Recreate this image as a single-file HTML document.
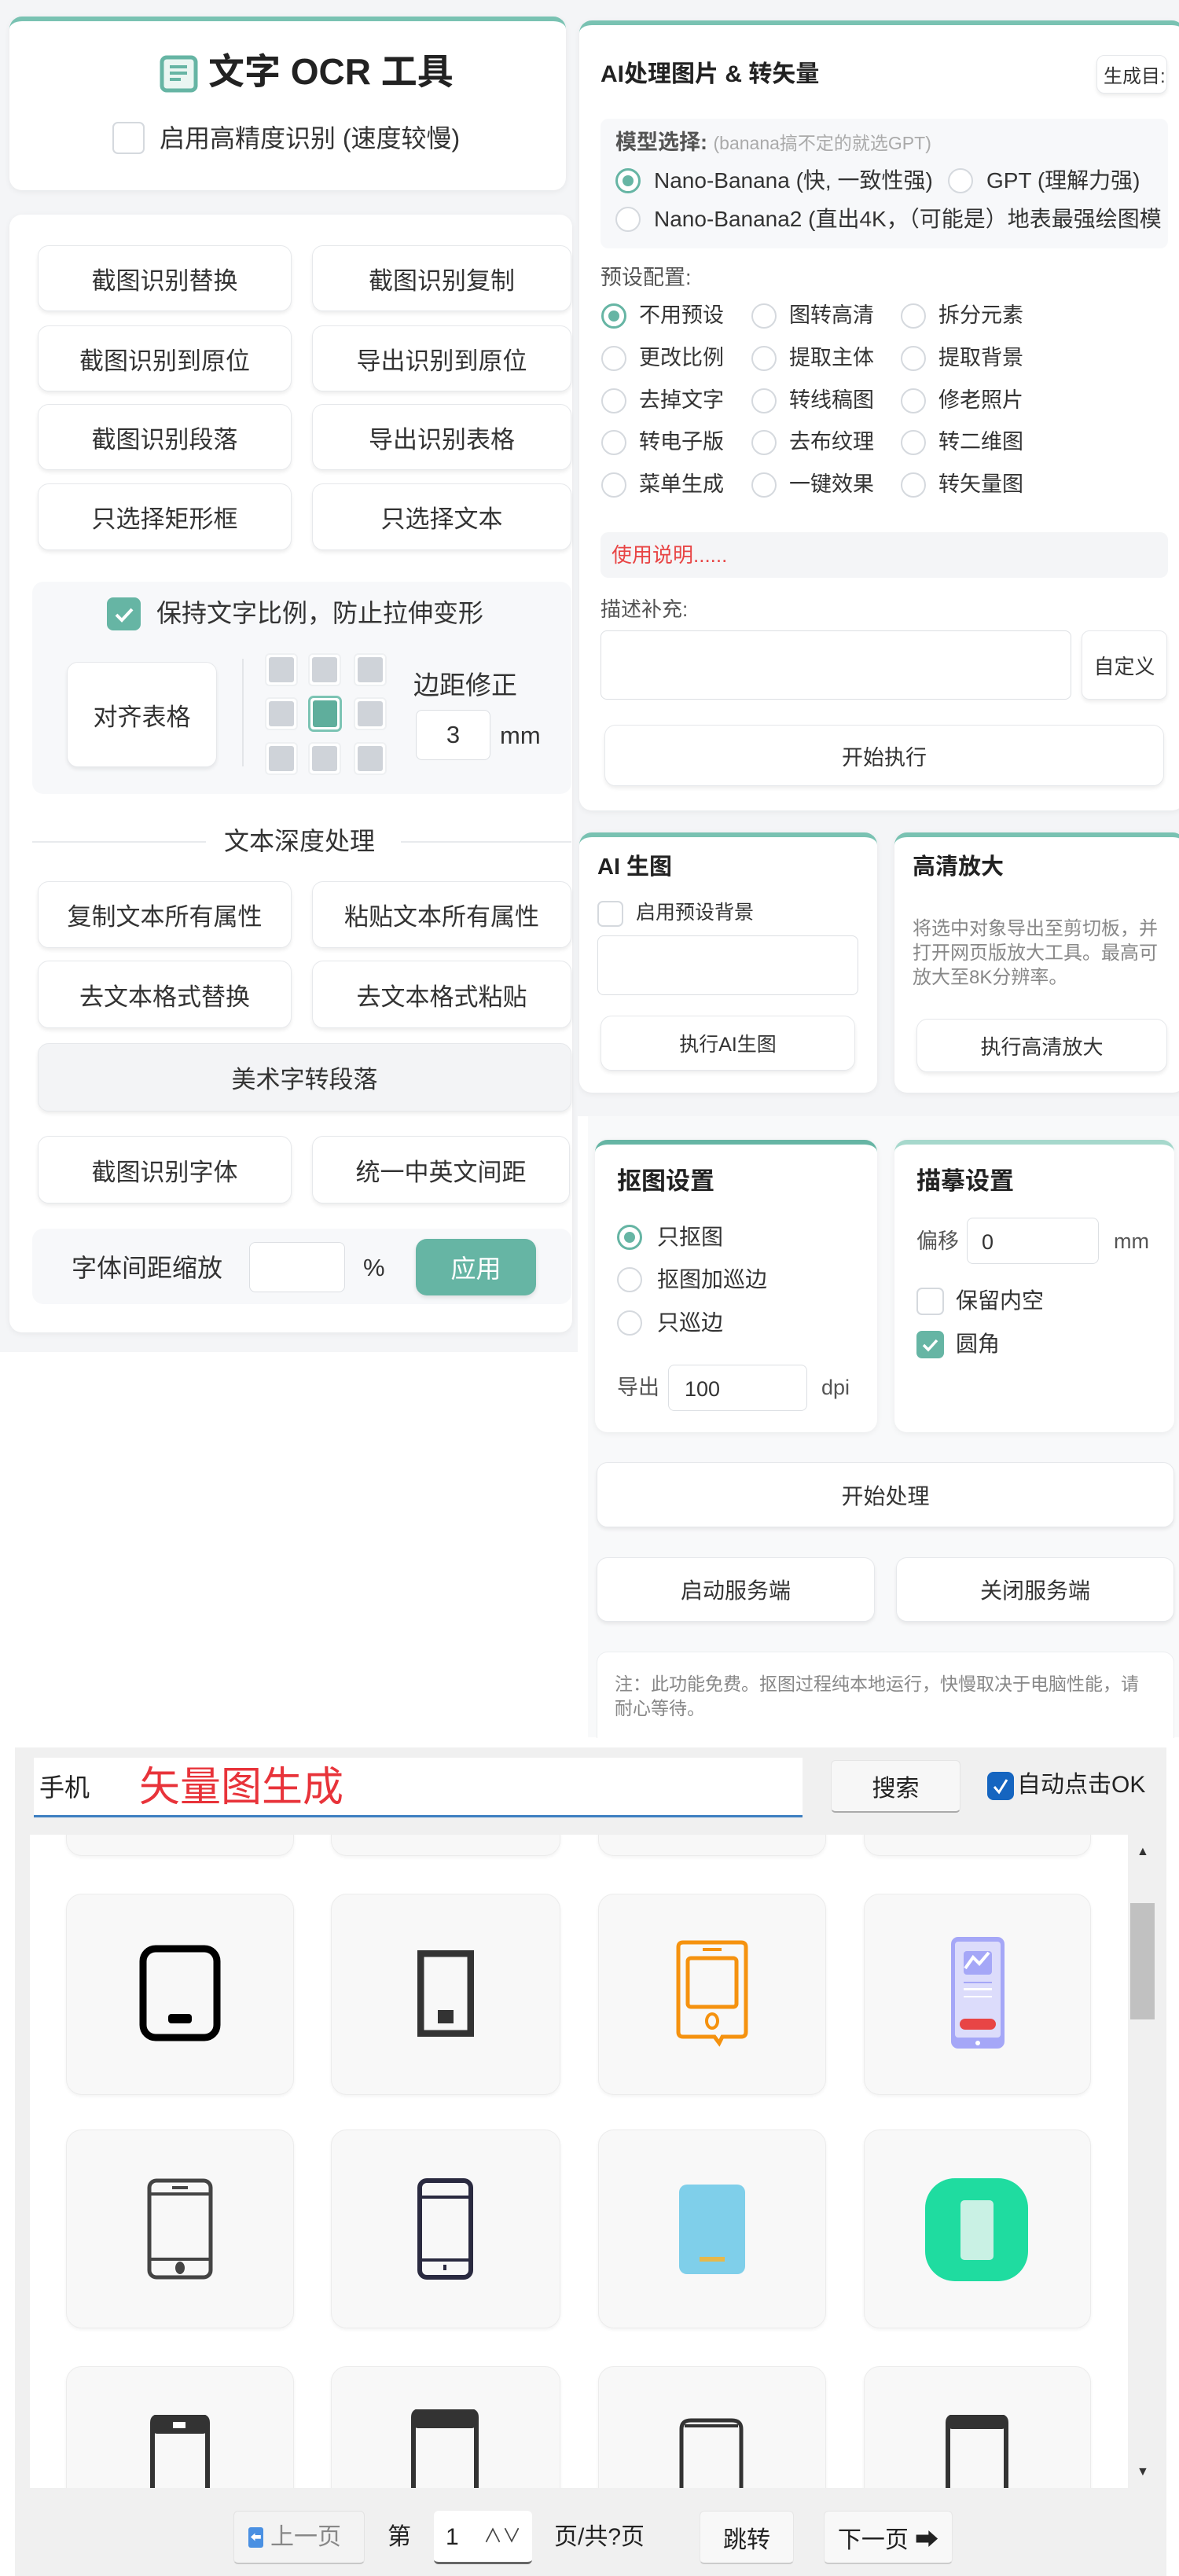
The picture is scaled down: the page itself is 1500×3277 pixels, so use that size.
<!DOCTYPE html>
<html><head><meta charset="utf-8">
<style>
*{box-sizing:border-box;margin:0;padding:0}
body{width:1500px;height:3277px;position:relative;background:#fff;font-family:"Liberation Sans","Noto Sans CJK SC",sans-serif;color:#333;overflow:hidden}
.a{position:absolute}
.card{position:absolute;background:#fff;border-radius:16px;box-shadow:0 2px 8px rgba(0,0,0,.06)}
.top{border-top:6px solid #79c2b2}
.btn{position:absolute;background:#fff;border:1px solid #e6e8eb;border-radius:14px;box-shadow:0 3px 5px rgba(0,0,0,.07);display:flex;align-items:center;justify-content:center;font-size:31px;color:#333}
.rb{position:absolute;width:32px;height:32px;border-radius:50%;border:2px solid #d5d9de;background:#fff}
.rb.on{border:3px solid #66b5a4}
.rb.on::after{content:"";position:absolute;left:6px;top:6px;width:14px;height:14px;border-radius:50%;background:#66b5a4}
.t{position:absolute;white-space:nowrap;line-height:1}
.cb{position:absolute;border:2px solid #d5d9de;border-radius:7px;background:#fff}
.cb.on{background:#66b5a4;border-color:#66b5a4}
.inp{position:absolute;background:#fff;border:1.5px solid #dcdfe3;border-radius:8px}
.ic{position:absolute;background:#f8f8f8;border:1px solid #ececec;border-radius:20px;box-shadow:0 2px 4px rgba(0,0,0,.05)}
.cell{position:absolute;width:42px;height:42px;border:2px solid #eef0f2;border-radius:6px;background:#fff}
.cell::after{content:"";position:absolute;left:3px;top:3px;width:32px;height:32px;background:#cfd3d9;border-radius:3px}
</style></head><body>

<div class="a" style="left:0;top:0;width:735px;height:1720px;background:#f4f5f7"></div>
<div class="a" style="left:735px;top:0;width:765px;height:1420px;background:#f4f5f7"></div>
<div class="a" style="left:748px;top:1420px;width:752px;height:790px;background:#f8f9fa"></div>

<div class="card top" style="left:12px;top:21px;width:708px;height:221px"></div>
<svg class="a" style="left:203px;top:70px" width="49" height="48" viewBox="0 0 49 48"><rect x="3" y="3" width="43" height="42" rx="6" fill="#eaf6f2" stroke="#66b5a4" stroke-width="5"/><rect x="13" y="13" width="22" height="4" fill="#66b5a4"/><rect x="13" y="21" width="22" height="4" fill="#66b5a4"/><rect x="13" y="29" width="14" height="4" fill="#66b5a4"/></svg>
<div class="t" style="left:265px;top:68px;font-size:46px;font-weight:bold;color:#222">文字 OCR 工具</div>
<div class="cb" style="left:143px;top:155px;width:41px;height:41px"></div>
<div class="t" style="left:203px;top:160px;font-size:32px;color:#333">启用高精度识别 (速度较慢)</div>

<div class="card" style="left:12px;top:273px;width:716px;height:1422px"></div>
<div class="btn" style="left:48px;top:312px;width:323px;height:84px">截图识别替换</div>
<div class="btn" style="left:397px;top:312px;width:330px;height:84px">截图识别复制</div>
<div class="btn" style="left:48px;top:414px;width:323px;height:84px">截图识别到原位</div>
<div class="btn" style="left:397px;top:414px;width:330px;height:84px">导出识别到原位</div>
<div class="btn" style="left:48px;top:514px;width:323px;height:84px">截图识别段落</div>
<div class="btn" style="left:397px;top:514px;width:330px;height:84px">导出识别表格</div>
<div class="btn" style="left:48px;top:615px;width:323px;height:85px">只选择矩形框</div>
<div class="btn" style="left:397px;top:615px;width:330px;height:85px">只选择文本</div>

<div class="a" style="left:41px;top:740px;width:686px;height:270px;background:#f7f8fa;border-radius:14px"></div>
<div class="cb on" style="left:136px;top:760px;width:43px;height:42px;border-radius:8px"></div>
<svg class="a" style="left:136px;top:760px" width="43" height="42"><path d="M12 22 L19 29 L32 15" fill="none" stroke="#fff" stroke-width="4"/></svg>
<div class="t" style="left:199px;top:764px;font-size:32px;color:#333">保持文字比例，防止拉伸变形</div>
<div class="btn" style="left:85px;top:842px;width:191px;height:134px;font-size:31px">对齐表格</div>
<div class="a" style="left:308px;top:838px;width:2px;height:137px;background:#e3e5e8"></div>
<div class="cell" style="left:337px;top:831px"></div><div class="cell" style="left:392px;top:831px"></div><div class="cell" style="left:450px;top:831px"></div>
<div class="cell" style="left:337px;top:887px"></div>
<div class="a" style="left:392px;top:885px;width:43px;height:46px;border:3px solid #7cc4b4;border-radius:7px;background:#fff"><div style="margin:3px;width:31px;height:34px;background:#5fae9c;border-radius:3px"></div></div>
<div class="cell" style="left:450px;top:887px"></div>
<div class="cell" style="left:337px;top:944px"></div><div class="cell" style="left:392px;top:944px"></div><div class="cell" style="left:450px;top:944px"></div>
<div class="t" style="left:526px;top:855px;font-size:33px;color:#333">边距修正</div>
<div class="inp" style="left:529px;top:903px;width:95px;height:64px;font-size:31px;display:flex;align-items:center;justify-content:center">3</div>
<div class="t" style="left:636px;top:920px;font-size:31px">mm</div>

<div class="a" style="left:41px;top:1070px;width:221px;height:2px;background:#e8eaed"></div>
<div class="a" style="left:510px;top:1070px;width:217px;height:2px;background:#e8eaed"></div>
<div class="t" style="left:285px;top:1054px;font-size:32px;color:#333">文本深度处理</div>

<div class="btn" style="left:48px;top:1121px;width:323px;height:85px">复制文本所有属性</div>
<div class="btn" style="left:397px;top:1121px;width:330px;height:85px">粘贴文本所有属性</div>
<div class="btn" style="left:48px;top:1222px;width:323px;height:86px">去文本格式替换</div>
<div class="btn" style="left:397px;top:1222px;width:330px;height:86px">去文本格式粘贴</div>
<div class="btn" style="left:48px;top:1327px;width:679px;height:87px;background:#f3f4f6">美术字转段落</div>
<div class="btn" style="left:48px;top:1445px;width:323px;height:86px">截图识别字体</div>
<div class="btn" style="left:397px;top:1445px;width:328px;height:86px">统一中英文间距</div>
<div class="a" style="left:41px;top:1563px;width:686px;height:96px;background:#f7f8fa;border-radius:14px"></div>
<div class="t" style="left:91px;top:1597px;font-size:32px">字体间距缩放</div>
<div class="inp" style="left:317px;top:1580px;width:122px;height:64px"></div>
<div class="t" style="left:462px;top:1597px;font-size:31px">%</div>
<div class="a" style="left:529px;top:1576px;width:153px;height:72px;background:#66b5a4;border-radius:14px;color:#fff;font-size:32px;display:flex;align-items:center;justify-content:center;box-shadow:0 3px 6px rgba(0,0,0,.1)">应用</div>

<div class="card top" style="left:737px;top:26px;width:770px;height:1005px"></div>
<div class="t" style="left:764px;top:80px;font-size:30px;font-weight:bold;color:#222">AI处理图片 &amp; 转矢量</div>
<div class="btn" style="left:1395px;top:70px;width:90px;height:49px;font-size:24px;border-radius:10px;justify-content:flex-start;padding-left:8px;overflow:hidden">生成目:</div>
<div class="a" style="left:764px;top:151px;width:722px;height:165px;background:#f7f8fa;border-radius:10px"></div>
<div class="t" style="left:783px;top:168px;font-size:27px;font-weight:bold;color:#555">模型选择: <span style="font-weight:normal;font-size:23px;color:#aaa">(banana搞不定的就选GPT)</span></div>
<div class="rb on" style="left:783px;top:214px"></div>
<div class="t" style="left:832px;top:216px;font-size:28px">Nano-Banana (快, 一致性强)</div>
<div class="rb" style="left:1206px;top:214px"></div>
<div class="t" style="left:1255px;top:216px;font-size:28px">GPT (理解力强)</div>
<div class="rb" style="left:783px;top:263px"></div>
<div class="t" style="left:832px;top:265px;font-size:28px">Nano-Banana2 (直出4K，（可能是）地表最强绘图模</div>
<div class="t" style="left:764px;top:340px;font-size:27px;color:#555">预设配置:</div>

<div class="rb on" style="left:765px;top:386px"></div><div class="t" style="left:813px;top:388px;font-size:27px">不用预设</div>
<div class="rb" style="left:956px;top:386px"></div><div class="t" style="left:1004px;top:388px;font-size:27px">图转高清</div>
<div class="rb" style="left:1146px;top:386px"></div><div class="t" style="left:1194px;top:388px;font-size:27px">拆分元素</div>
<div class="rb" style="left:765px;top:440px"></div><div class="t" style="left:813px;top:442px;font-size:27px">更改比例</div>
<div class="rb" style="left:956px;top:440px"></div><div class="t" style="left:1004px;top:442px;font-size:27px">提取主体</div>
<div class="rb" style="left:1146px;top:440px"></div><div class="t" style="left:1194px;top:442px;font-size:27px">提取背景</div>
<div class="rb" style="left:765px;top:494px"></div><div class="t" style="left:813px;top:496px;font-size:27px">去掉文字</div>
<div class="rb" style="left:956px;top:494px"></div><div class="t" style="left:1004px;top:496px;font-size:27px">转线稿图</div>
<div class="rb" style="left:1146px;top:494px"></div><div class="t" style="left:1194px;top:496px;font-size:27px">修老照片</div>
<div class="rb" style="left:765px;top:547px"></div><div class="t" style="left:813px;top:549px;font-size:27px">转电子版</div>
<div class="rb" style="left:956px;top:547px"></div><div class="t" style="left:1004px;top:549px;font-size:27px">去布纹理</div>
<div class="rb" style="left:1146px;top:547px"></div><div class="t" style="left:1194px;top:549px;font-size:27px">转二维图</div>
<div class="rb" style="left:765px;top:601px"></div><div class="t" style="left:813px;top:603px;font-size:27px">菜单生成</div>
<div class="rb" style="left:956px;top:601px"></div><div class="t" style="left:1004px;top:603px;font-size:27px">一键效果</div>
<div class="rb" style="left:1146px;top:601px"></div><div class="t" style="left:1194px;top:603px;font-size:27px">转矢量图</div>

<div class="a" style="left:764px;top:677px;width:722px;height:58px;background:#f4f5f7;border-radius:10px"></div>
<div class="t" style="left:778px;top:693px;font-size:26px;color:#e84545">使用说明......</div>
<div class="t" style="left:764px;top:762px;font-size:26px;color:#555">描述补充:</div>
<div class="inp" style="left:764px;top:802px;width:599px;height:88px"></div>
<div class="btn" style="left:1376px;top:802px;width:109px;height:88px;font-size:26px;border-radius:10px">自定义</div>
<div class="btn" style="left:769px;top:922px;width:712px;height:78px;font-size:27px">开始执行</div>

<div class="card top" style="left:737px;top:1059px;width:379px;height:331px"></div>
<div class="t" style="left:760px;top:1089px;font-size:29px;font-weight:bold;color:#222">AI 生图</div>
<div class="cb" style="left:760px;top:1146px;width:33px;height:33px"></div>
<div class="t" style="left:809px;top:1149px;font-size:25px">启用预设背景</div>
<div class="inp" style="left:760px;top:1190px;width:332px;height:76px"></div>
<div class="btn" style="left:764px;top:1292px;width:324px;height:70px;font-size:25px">执行AI生图</div>

<div class="card top" style="left:1138px;top:1059px;width:370px;height:331px"></div>
<div class="t" style="left:1161px;top:1089px;font-size:29px;font-weight:bold;color:#222">高清放大</div>
<div class="a" style="left:1161px;top:1166px;width:312px;font-size:24px;line-height:31px;color:#888">将选中对象导出至剪切板，并打开网页版放大工具。最高可放大至8K分辨率。</div>
<div class="btn" style="left:1166px;top:1296px;width:319px;height:68px;font-size:26px">执行高清放大</div>

<div class="card top" style="left:757px;top:1450px;width:359px;height:372px;border-top-color:#66b5a4"></div>
<div class="t" style="left:785px;top:1487px;font-size:31px;font-weight:bold;color:#222">抠图设置</div>
<div class="rb on" style="left:785px;top:1558px"></div><div class="t" style="left:836px;top:1560px;font-size:28px">只抠图</div>
<div class="rb" style="left:785px;top:1612px"></div><div class="t" style="left:836px;top:1614px;font-size:28px">抠图加巡边</div>
<div class="rb" style="left:785px;top:1667px"></div><div class="t" style="left:836px;top:1669px;font-size:28px">只巡边</div>
<div class="t" style="left:785px;top:1752px;font-size:27px;color:#555">导出</div>
<div class="inp" style="left:850px;top:1736px;width:177px;height:59px;font-size:27px;padding:15px 0 0 20px">100</div>
<div class="t" style="left:1045px;top:1752px;font-size:27px;color:#555">dpi</div>

<div class="card top" style="left:1138px;top:1450px;width:356px;height:372px;border-top-color:#a6d8cc"></div>
<div class="t" style="left:1166px;top:1487px;font-size:31px;font-weight:bold;color:#222">描摹设置</div>
<div class="t" style="left:1166px;top:1566px;font-size:27px;color:#555">偏移</div>
<div class="inp" style="left:1230px;top:1549px;width:168px;height:59px;font-size:27px;padding:15px 0 0 18px">0</div>
<div class="t" style="left:1417px;top:1566px;font-size:27px;color:#555">mm</div>
<div class="cb" style="left:1166px;top:1638px;width:35px;height:35px"></div><div class="t" style="left:1216px;top:1641px;font-size:28px">保留内空</div>
<div class="cb on" style="left:1166px;top:1693px;width:35px;height:35px"></div>
<svg class="a" style="left:1166px;top:1693px" width="35" height="35"><path d="M9 18 L15 24 L26 12" fill="none" stroke="#fff" stroke-width="3.5"/></svg>
<div class="t" style="left:1216px;top:1696px;font-size:28px">圆角</div>

<div class="btn" style="left:759px;top:1860px;width:735px;height:83px;font-size:28px">开始处理</div>
<div class="btn" style="left:759px;top:1981px;width:354px;height:82px;font-size:28px">启动服务端</div>
<div class="btn" style="left:1140px;top:1981px;width:354px;height:82px;font-size:28px">关闭服务端</div>
<div class="a" style="left:759px;top:2101px;width:735px;height:110px;background:#fff;border:1px solid #eceef0;border-bottom:none;border-radius:14px 14px 0 0"></div>
<div class="a" style="left:782px;top:2127px;width:688px;font-size:23px;line-height:31px;color:#888">注：此功能免费。抠图过程纯本地运行，快慢取决于电脑性能，请耐心等待。</div>

<div class="a" style="left:19px;top:2223px;width:1465px;height:1054px;background:#f0f0f0"></div>
<div class="a" style="left:43px;top:2236px;width:978px;height:76px;background:#fff;border-bottom:3px solid #3d7fc1"></div>
<div class="t" style="left:50px;top:2258px;font-size:32px;color:#222">手机</div>
<div class="t" style="left:177px;top:2248px;font-size:52px;color:#e8333a">矢量图生成</div>
<div class="a" style="left:1057px;top:2239px;width:165px;height:67px;background:#f7f7f7;border:1px solid #e4e4e4;border-bottom:2px solid #aaa;border-radius:6px;display:flex;align-items:center;justify-content:center;font-size:30px;color:#222">搜索</div>
<div class="a" style="left:1256px;top:2254px;width:34px;height:36px;background:#1565c0;border-radius:8px"></div>
<svg class="a" style="left:1256px;top:2254px" width="34" height="36"><path d="M9 19 L15 26 L25 10" fill="none" stroke="#fff" stroke-width="3"/></svg>
<div class="t" style="left:1294px;top:2256px;font-size:30px;color:#222">自动点击OK</div>

<div class="a" style="left:38px;top:2334px;width:1397px;height:831px;background:#fff;overflow:hidden">
  <div class="ic" style="left:46px;top:-40px;width:290px;height:67px"></div>
  <div class="ic" style="left:383px;top:-40px;width:292px;height:67px"></div>
  <div class="ic" style="left:723px;top:-40px;width:290px;height:67px"></div>
  <div class="ic" style="left:1061px;top:-40px;width:289px;height:67px"></div>
  <div class="ic" style="left:46px;top:75px;width:290px;height:256px"></div>
  <div class="ic" style="left:383px;top:75px;width:292px;height:256px"></div>
  <div class="ic" style="left:723px;top:75px;width:290px;height:256px"></div>
  <div class="ic" style="left:1061px;top:75px;width:289px;height:256px"></div>
  <div class="ic" style="left:46px;top:375px;width:290px;height:253px"></div>
  <div class="ic" style="left:383px;top:375px;width:292px;height:253px"></div>
  <div class="ic" style="left:723px;top:375px;width:290px;height:253px"></div>
  <div class="ic" style="left:1061px;top:375px;width:289px;height:253px"></div>
  <div class="ic" style="left:46px;top:676px;width:290px;height:253px"></div>
  <div class="ic" style="left:383px;top:676px;width:292px;height:253px"></div>
  <div class="ic" style="left:723px;top:676px;width:290px;height:253px"></div>
  <div class="ic" style="left:1061px;top:676px;width:289px;height:253px"></div>
</div>
<svg class="a" style="left:177px;top:2474px" width="104" height="123"><rect x="5" y="5" width="94" height="113" rx="16" fill="none" stroke="#000" stroke-width="9"/><rect x="37" y="88" width="30" height="12" rx="4" fill="#000"/></svg>
<svg class="a" style="left:531px;top:2481px" width="72" height="110"><rect x="4" y="4" width="64" height="102" fill="none" stroke="#333" stroke-width="9"/><rect x="26" y="76" width="20" height="17" fill="#333"/></svg>
<svg class="a" style="left:859px;top:2467px" width="94" height="137"><path d="M10 4 H84 Q90 4 90 10 V118 Q90 124 84 124 H60 L56 132 L50 124 H10 Q4 124 4 118 V10 Q4 4 10 4 Z" fill="none" stroke="#f5920f" stroke-width="5"/><rect x="16" y="24" width="62" height="62" rx="4" fill="none" stroke="#f5920f" stroke-width="5"/><rect x="35" y="11" width="24" height="4" fill="#f5920f"/><ellipse cx="47" cy="104" rx="7" ry="9" fill="none" stroke="#f5920f" stroke-width="4"/></svg>
<svg class="a" style="left:1208px;top:2462px" width="72" height="146"><rect x="2" y="2" width="68" height="142" rx="9" fill="#a5a7f7"/><rect x="7" y="8" width="58" height="122" rx="4" fill="#dcdcfb"/><rect x="18" y="20" width="36" height="30" rx="4" fill="#a5a7f7"/><path d="M20 42 L30 28 L38 36 L50 22" stroke="#fff" stroke-width="4" fill="none"/><rect x="18" y="59" width="36" height="2" fill="#a5a7f7"/><rect x="18" y="67" width="36" height="3" fill="#fff"/><rect x="18" y="77" width="36" height="2" fill="#fff"/><rect x="13" y="106" width="46" height="14" rx="7" fill="#e84545"/><circle cx="36" cy="137" r="3" fill="#fff"/></svg>
<svg class="a" style="left:187px;top:2771px" width="84" height="129"><rect x="3" y="3" width="78" height="123" rx="9" fill="none" stroke="#444" stroke-width="5"/><line x1="3" y1="20" x2="81" y2="20" stroke="#444" stroke-width="4"/><line x1="3" y1="103" x2="81" y2="103" stroke="#444" stroke-width="4"/><rect x="32" y="10" width="20" height="4" fill="#444"/><ellipse cx="42" cy="114" rx="6" ry="8" fill="#444"/></svg>
<svg class="a" style="left:531px;top:2771px" width="71" height="129"><rect x="3" y="3" width="65" height="123" rx="9" fill="none" stroke="#2a2a40" stroke-width="6"/><line x1="3" y1="24" x2="68" y2="24" stroke="#2a2a40" stroke-width="4"/><line x1="3" y1="104" x2="68" y2="104" stroke="#2a2a40" stroke-width="4"/><rect x="33" y="110" width="4" height="7" fill="#2a2a40"/></svg>
<svg class="a" style="left:864px;top:2779px" width="84" height="114"><rect x="0" y="0" width="84" height="114" rx="10" fill="#7fcfea"/><rect x="26" y="92" width="32" height="6" fill="#e6b84a"/></svg>
<svg class="a" style="left:1177px;top:2771px" width="131" height="131"><rect x="0" y="0" width="131" height="131" rx="38" fill="#1fdca0"/><rect x="45" y="28" width="42" height="76" rx="5" fill="#c9f1e4"/></svg>
<svg class="a" style="left:190px;top:3072px" width="78" height="93"><path d="M4 93 V10 Q4 2 12 2 H66 Q74 2 74 10 V93" fill="none" stroke="#333" stroke-width="6"/><rect x="4" y="2" width="70" height="22" rx="6" fill="#333"/><rect x="30" y="9" width="16" height="8" fill="#fff"/></svg>
<svg class="a" style="left:522px;top:3065px" width="88" height="100"><path d="M4 100 V10 Q4 2 12 2 H76 Q84 2 84 10 V100" fill="none" stroke="#333" stroke-width="6"/><rect x="4" y="2" width="80" height="22" rx="6" fill="#333"/></svg>
<svg class="a" style="left:863px;top:3076px" width="84" height="89"><path d="M4 89 V14 Q4 3 16 3 H68 Q80 3 80 14 V89" fill="none" stroke="#333" stroke-width="5"/><line x1="8" y1="10" x2="76" y2="10" stroke="#333" stroke-width="4"/></svg>
<svg class="a" style="left:1202px;top:3072px" width="82" height="93"><path d="M4 93 V10 Q4 2 12 2 H70 Q78 2 78 10 V93" fill="none" stroke="#333" stroke-width="6"/><rect x="4" y="2" width="74" height="16" rx="5" fill="#333"/></svg>

<div class="a" style="left:1435px;top:2334px;width:48px;height:831px;background:#f0f0f0"></div>
<div class="a" style="left:1438px;top:2421px;width:31px;height:148px;background:#c1c1c1"></div>
<div class="t" style="left:1446px;top:2348px;font-size:16px;color:#333">▲</div>
<div class="t" style="left:1446px;top:3137px;font-size:16px;color:#333">▼</div>

<div class="a" style="left:297px;top:3194px;width:167px;height:68px;background:#f3f3f3;border:1px solid #e2e2e2;border-bottom:2px solid #c8c8c8;border-radius:6px"></div>
<div class="a" style="left:316px;top:3215px;width:19px;height:26px;background:#4a90e2;border-radius:3px;color:#fff;font-size:14px;text-align:center;line-height:26px">⬅</div>
<div class="t" style="left:344px;top:3213px;font-size:30px;color:#888">上一页</div>
<div class="t" style="left:493px;top:3213px;font-size:30px;color:#222">第</div>
<div class="a" style="left:552px;top:3194px;width:125px;height:68px;background:#fff;border-radius:6px;border-bottom:3px solid #666"></div>
<div class="t" style="left:567px;top:3213px;font-size:30px;color:#222">1</div>
<div class="t" style="left:615px;top:3215px;font-size:24px;color:#444">∧∨</div>
<div class="t" style="left:705px;top:3213px;font-size:30px;color:#222">页/共?页</div>
<div class="a" style="left:890px;top:3194px;width:120px;height:68px;background:#f8f8f8;border:1px solid #e6e6e6;border-bottom:2px solid #ccc;border-radius:6px;display:flex;align-items:center;justify-content:center;font-size:30px;color:#222">跳转</div>
<div class="a" style="left:1048px;top:3194px;width:164px;height:68px;background:#f8f8f8;border:1px solid #e6e6e6;border-bottom:2px solid #ccc;border-radius:6px;display:flex;align-items:center;justify-content:center;font-size:30px;color:#222">下一页 ➡</div>
</body></html>
